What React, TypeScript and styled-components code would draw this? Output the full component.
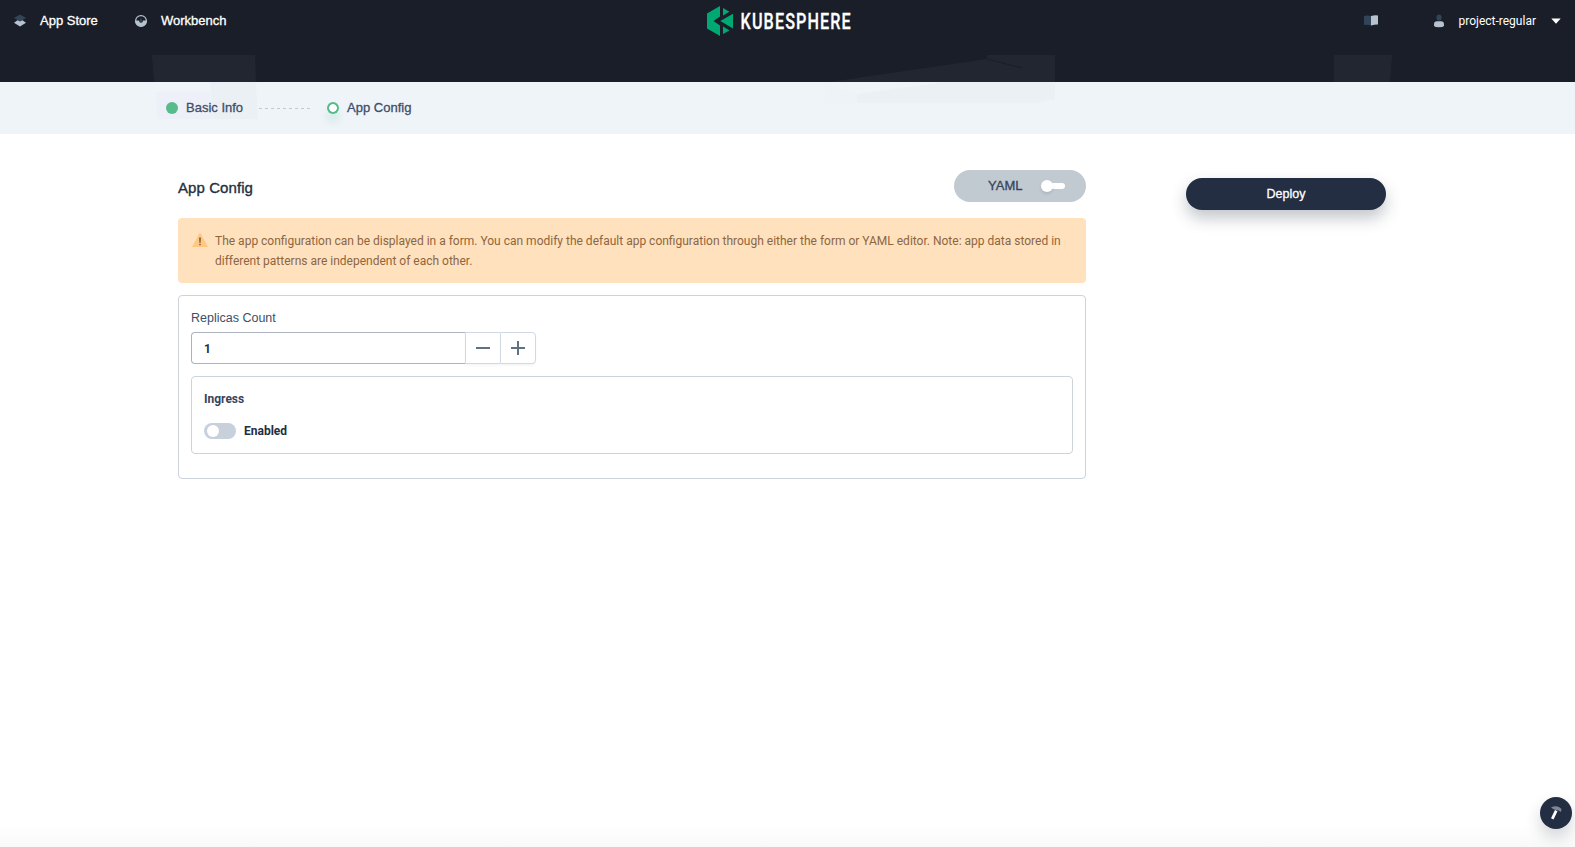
import React from "react";
import styled, { createGlobalStyle } from "styled-components";

const Global = createGlobalStyle`
  * { box-sizing: border-box; }
  body { margin: 0; background: #fff; font-family: Roboto, "Liberation Sans", sans-serif; font-size: 12px; color: #242e42; }
  button, input { font-family: inherit; }
  p, h2 { margin: 0; }
`;

const grotesk = `"Liberation Sans", Arial, sans-serif`;

const Page = styled.div`
  position: relative;
  height: 847px;
  overflow: hidden;
  background: linear-gradient(#fff 825px, #f9f9f9 847px);
`;
const Header = styled.header`
  position: relative;
  height: 82px;
  background: #1a1e28;
`;
const Nav = styled.nav`
  height: 41px;
  padding: 0 14px;
  display: grid;
  grid-template-columns: 1fr auto 1fr;
  align-items: center;
`;
const NavGroup = styled.div<{ $end?: boolean }>`
  display: flex;
  align-items: center;
  justify-content: ${(p) => (p.$end ? "flex-end" : "flex-start")};
`;
const NavItem = styled.a<{ $width?: number }>`
  display: flex;
  align-items: center;
  gap: 14px;
  width: ${(p) => (p.$width ? p.$width + "px" : "auto")};
`;
const Label = styled.span<{ $size: number; $weight: number; $color?: string }>`
  font-size: ${(p) => p.$size}px;
  font-weight: ${(p) => p.$weight};
  color: ${(p) => p.$color ?? "#242e42"};
  white-space: nowrap;
  line-height: 20px;
`;
const GroteskLabel = styled(Label)<{ $stroke?: number }>`
  font-family: ${grotesk};
  -webkit-text-stroke: ${(p) => p.$stroke ?? 0.3}px currentColor;
`;
const Brand = styled.div`
  display: flex;
  height: 41px;
  margin: 0 12px 0 -3px;
`;
const DocsLink = styled.a`
  display: flex;
  margin-right: 56px;
`;
const Account = styled.div`
  display: flex;
  align-items: center;
  color: #fff;
`;
const AccountName = styled(Label)`
  margin: 0 15px;
  padding-top: 1px;
`;
const Backdrop = styled.svg`
  position: absolute;
  top: 55px;
  left: 0;
  pointer-events: none;
`;
const Steps = styled.div`
  height: 52px;
  padding-left: 166px;
  display: flex;
  align-items: center;
  background: #eff4f9;
`;
const Step = styled.div`
  position: relative;
  z-index: 1;
  display: flex;
  align-items: center;
  gap: 8px;
`;
const Dot = styled.span<{ $done?: boolean }>`
  width: 12px;
  height: 12px;
  border-radius: 50%;
  background: ${(p) => (p.$done ? "#55bc8a" : "radial-gradient(circle, #fff 3.5px, #55bc8a 4.2px)")};
  box-shadow: ${(p) => (p.$done ? "none" : "0 8px 8px rgba(85,188,138,.2)")};
`;
const StepLine = styled.svg`
  margin: 0 16px;
  flex: none;
`;
const Body = styled.main`
  display: flex;
  align-items: flex-start;
  padding: 36px 0 0 178px;
  gap: 100px;
`;
const Main = styled.section`
  width: 908px;
`;
const TitleRow = styled.div`
  height: 32px;
  display: flex;
  justify-content: space-between;
  align-items: flex-start;
`;
const Title = styled.h2`
  padding-top: 6px;
  font-family: ${grotesk};
  font-size: 15px;
  font-weight: 400;
  letter-spacing: 0.08px;
  line-height: 24px;
  -webkit-text-stroke: 0.35px currentColor;
`;
const YamlToggle = styled.button`
  display: flex;
  align-items: center;
  width: 132px;
  height: 32px;
  padding: 0 21px 0 34px;
  justify-content: space-between;
  border: 0;
  border-radius: 16px;
  background: #c1c9d1;
`;
const MiniTrack = styled.span`
  position: relative;
  width: 22px;
  height: 6px;
  border-radius: 3px;
  background: #fff;
`;
const MiniKnob = styled.span`
  position: absolute;
  left: -2px;
  top: -3px;
  width: 12px;
  height: 12px;
  border-radius: 50%;
  background: #fff;
  box-shadow: 0 2px 3px rgba(36, 46, 66, 0.12);
`;
const Alert = styled.div`
  display: flex;
  gap: 7px;
  height: 65px;
  margin-top: 16px;
  padding: 13px 20px 0 14px;
  border-radius: 4px;
  background: #ffe1be;
`;
const AlertIcon = styled.svg`
  flex: none;
`;
const AlertText = styled.p`
  color: #8d663e;
  font-size: 12px;
  line-height: 20px;
`;
const Card = styled.div`
  height: 184px;
  margin-top: 12px;
  padding: 12px;
  border: 1px solid #ccd3db;
  border-radius: 4px;
`;
const FieldName = styled.div`
  display: flex;
  height: 20px;
`;
const NumberField = styled.div`
  display: flex;
  height: 32px;
  width: 345px;
  margin-top: 4px;
`;
const NumberInput = styled.input`
  width: 274px;
  padding: 2px 12px 0;
  border: 1px solid #abb4be;
  border-right: 0;
  border-radius: 4px 0 0 4px;
  outline: 0;
  color: #242e42;
  font-size: 12px;
  font-weight: 700;
`;
const StepButton = styled.button<{ $last?: boolean }>`
  display: flex;
  align-items: center;
  justify-content: center;
  width: ${(p) => (p.$last ? 36 : 35)}px;
  padding: 0;
  border: 1px solid #d1dae4;
  border-right-width: ${(p) => (p.$last ? 1 : 0)}px;
  border-radius: ${(p) => (p.$last ? "0 4px 4px 0" : "0")};
  background: #fff;
  box-shadow: 0 2px 2px rgba(36, 46, 66, 0.04);
`;
const Group = styled.div`
  height: 78px;
  margin-top: 12px;
  padding: 12px;
  border: 1px solid #ccd3db;
  border-radius: 4px;
`;
const SwitchRow = styled.label`
  display: flex;
  align-items: center;
  gap: 8px;
  margin-top: 12px;
`;
const Switch = styled.span`
  display: flex;
  align-items: center;
  width: 32px;
  height: 16px;
  padding-left: 3px;
  border-radius: 8px;
  background: #c7d0db;
`;
const SwitchKnob = styled.span`
  width: 12px;
  height: 12px;
  border-radius: 50%;
  background: #fff;
`;
const Deploy = styled.button`
  width: 200px;
  height: 32px;
  margin-top: 8px;
  border: 0;
  border-radius: 16px;
  background: #242e42;
  box-shadow: 0 8px 16px rgba(36, 46, 66, 0.28);
`;
const ToolButton = styled.button`
  position: absolute;
  right: 3px;
  bottom: 18px;
  width: 32px;
  height: 32px;
  padding: 0;
  display: flex;
  align-items: center;
  justify-content: center;
  border: 0;
  border-radius: 50%;
  background: #242e42;
  box-shadow: 0 8px 16px rgba(36, 46, 66, 0.2);
`;

const Logo = () => (
  <svg width="146" height="41" viewBox="0 0 146 41" overflow="visible" aria-label="KubeSphere">
    <g fill="#00a971">
      <path d="M13 6V16.500L6.500 21L13 25.500V36L0 28.400V13.600Z" />
      <path d="M16 8L22.500 11.700L16 15.500Z" />
      <path d="M26 13.800V28.500L13.300 21Z" />
      <path d="M16 26.500L22.500 30.500L16 34Z" />
    </g>
    <text transform="translate(33.6 29) scale(.72 1)" textLength="153" lengthAdjust="spacing" fill="#fff" stroke="#fff" strokeWidth=".3" fontFamily="Roboto" fontSize="22.500" fontWeight="500">KUBESPHERE</text>
  </svg>
);

export default function App() {
  return (
    <>
      <Global />
      <Page>
        <Header>
          <Nav>
            <NavGroup>
              <NavItem $width={121}>
                <svg width="12" height="13" viewBox="0 0 12 13">
                  <path d="M0 8.800L3.500 6.300H8.500L12 8.800L6 12.500Z" fill="#b6c2cd" />
                  <path d="M6 .5L12 3.900L6 7.500L0 3.900Z" fill="#324558" />
                </svg>
                <GroteskLabel $size={13} $weight={400} $color="#fff">App Store</GroteskLabel>
              </NavItem>
              <NavItem>
                <svg width="12" height="12" viewBox="0 0 12 12">
                  <circle cx="6" cy="6" r="5.400" fill="none" stroke="#b6c2cd" strokeWidth="1.200" />
                  <path d="M0 5.500H4A2 2 0 0 0 8 5.500H12A6 6 0 0 1 0 5.500Z" fill="#b6c2cd" />
                  <path d="M6 2.800L7.500 6.300A1.500 1.500 0 1 1 4.500 6.300Z" fill="#324558" />
                </svg>
                <GroteskLabel $size={13} $weight={400} $color="#fff">Workbench</GroteskLabel>
              </NavItem>
            </NavGroup>
            <Brand><Logo /></Brand>
            <NavGroup $end>
              <DocsLink>
                <svg width="14" height="11" viewBox="0 0 14 11">
                  <path d="M0 1Q3-.2 7 1V10.500Q3 9.300 0 10Z" fill="#324558" />
                  <path d="M7 1Q11-.2 14 .5V9.500Q11 9.300 7 10.500Z" fill="#b6c2cd" />
                </svg>
              </DocsLink>
              <Account>
                <svg width="10" height="14" viewBox="0 0 10 14">
                  <rect x="2.500" y=".5" width="5" height="6" rx="2.500" fill="#324558" />
                  <path d="M0 12V10.500Q0 7.300 3 7.300H7Q10 7.300 10 10.500V12Q9 13.300 5 13.300T0 12Z" fill="#b6c2cd" />
                </svg>
                <AccountName $size={12} $weight={400} $color="#fff">project-regular</AccountName>
                <svg width="10" height="6" viewBox="0 0 10 6"><path d="M.3 .5H9.700L5 5.700Z" fill="#fff" /></svg>
              </Account>
            </NavGroup>
          </Nav>
          <Backdrop width="1575" height="79" viewBox="0 0 1575 79">
            <g fill="#fff" fillOpacity=".04">
              <path d="M152 0H208L210 27H154ZM208 0H255L256 27H210Z" />
              <path d="M830 27L987 4V0H1055V27ZM1334 0H1392L1390 27H1334Z" />
            </g>
            <path d="M987 4L1022 13" stroke="#1a1e28" />
            <path d="M156 37H210L213 64H157Z" fill="#e7e9fa" fillOpacity=".3" />
            <path d="M210 27H256L258 64H213ZM857 39L945 27H1055V44L1036 48H857Z" fill="#000" fillOpacity=".014" />
            <path d="M825 27L857 39V48H825Z" fill="#000" fillOpacity=".005" />
          </Backdrop>
        </Header>
        <Steps>
          <Step><Dot $done /><GroteskLabel $size={13} $weight={400} $color="#404e68">Basic Info</GroteskLabel></Step>
          <StepLine width="52" height="1"><path d="M0 .5H52" stroke="#c1c9d1" strokeDasharray="3 3" /></StepLine>
          <Step><Dot /><GroteskLabel $size={13} $weight={400} $color="#404e68">App Config</GroteskLabel></Step>
        </Steps>
        <Body>
          <Main>
            <TitleRow>
              <Title>App Config</Title>
              <YamlToggle>
                <GroteskLabel $size={13} $weight={400} $color="#36435c">YAML</GroteskLabel>
                <MiniTrack><MiniKnob /></MiniTrack>
              </YamlToggle>
            </TitleRow>
            <Alert>
              <AlertIcon width="16" height="16" viewBox="0 0 16 16">
                <path d="M8 1.500L16 16H0Z" fill="#ffc781" />
                <path d="M7 6.500H9L8.700 11.700H7.300ZM7.200 12.700H8.800V14.300H7.200Z" fill="#8d663e" />
              </AlertIcon>
              <AlertText>
                The app configuration can be displayed in a form. You can modify the default app configuration through either the form or YAML editor. Note: app data stored in different patterns are independent of each other.
              </AlertText>
            </Alert>
            <Card>
              <FieldName><GroteskLabel $size={12.5} $weight={400} $stroke={0} $color="#404e68">Replicas Count</GroteskLabel></FieldName>
              <NumberField>
                <NumberInput defaultValue="1" />
                <StepButton>
                  <svg width="14" height="14"><path d="M0 7H14" stroke="#5f7183" strokeWidth="2" /></svg>
                </StepButton>
                <StepButton $last>
                  <svg width="14" height="14"><path d="M0 7H14M7 0V14" stroke="#5f7183" strokeWidth="2" /></svg>
                </StepButton>
              </NumberField>
              <Group>
                <FieldName><Label $size={12} $weight={700} $color="#36435c">Ingress</Label></FieldName>
                <SwitchRow>
                  <Switch><SwitchKnob /></Switch>
                  <Label $size={12} $weight={700}>Enabled</Label>
                </SwitchRow>
              </Group>
            </Card>
          </Main>
          <Deploy><GroteskLabel $size={12.5} $weight={400} $color="#fff">Deploy</GroteskLabel></Deploy>
        </Body>
        <ToolButton>
          <svg width="14" height="16" viewBox="0 0 14 16">
            <path d="M6 5L8.500 6.200L4.500 14.500L2 13.300Z" fill="#fff" />
            <path d="M2 2.500Q6 .5 10 2L12.500 4L12 7L9.500 5.500L5 4.500Z" fill="#7d8797" />
          </svg>
        </ToolButton>
      </Page>
    </>
  );
}
